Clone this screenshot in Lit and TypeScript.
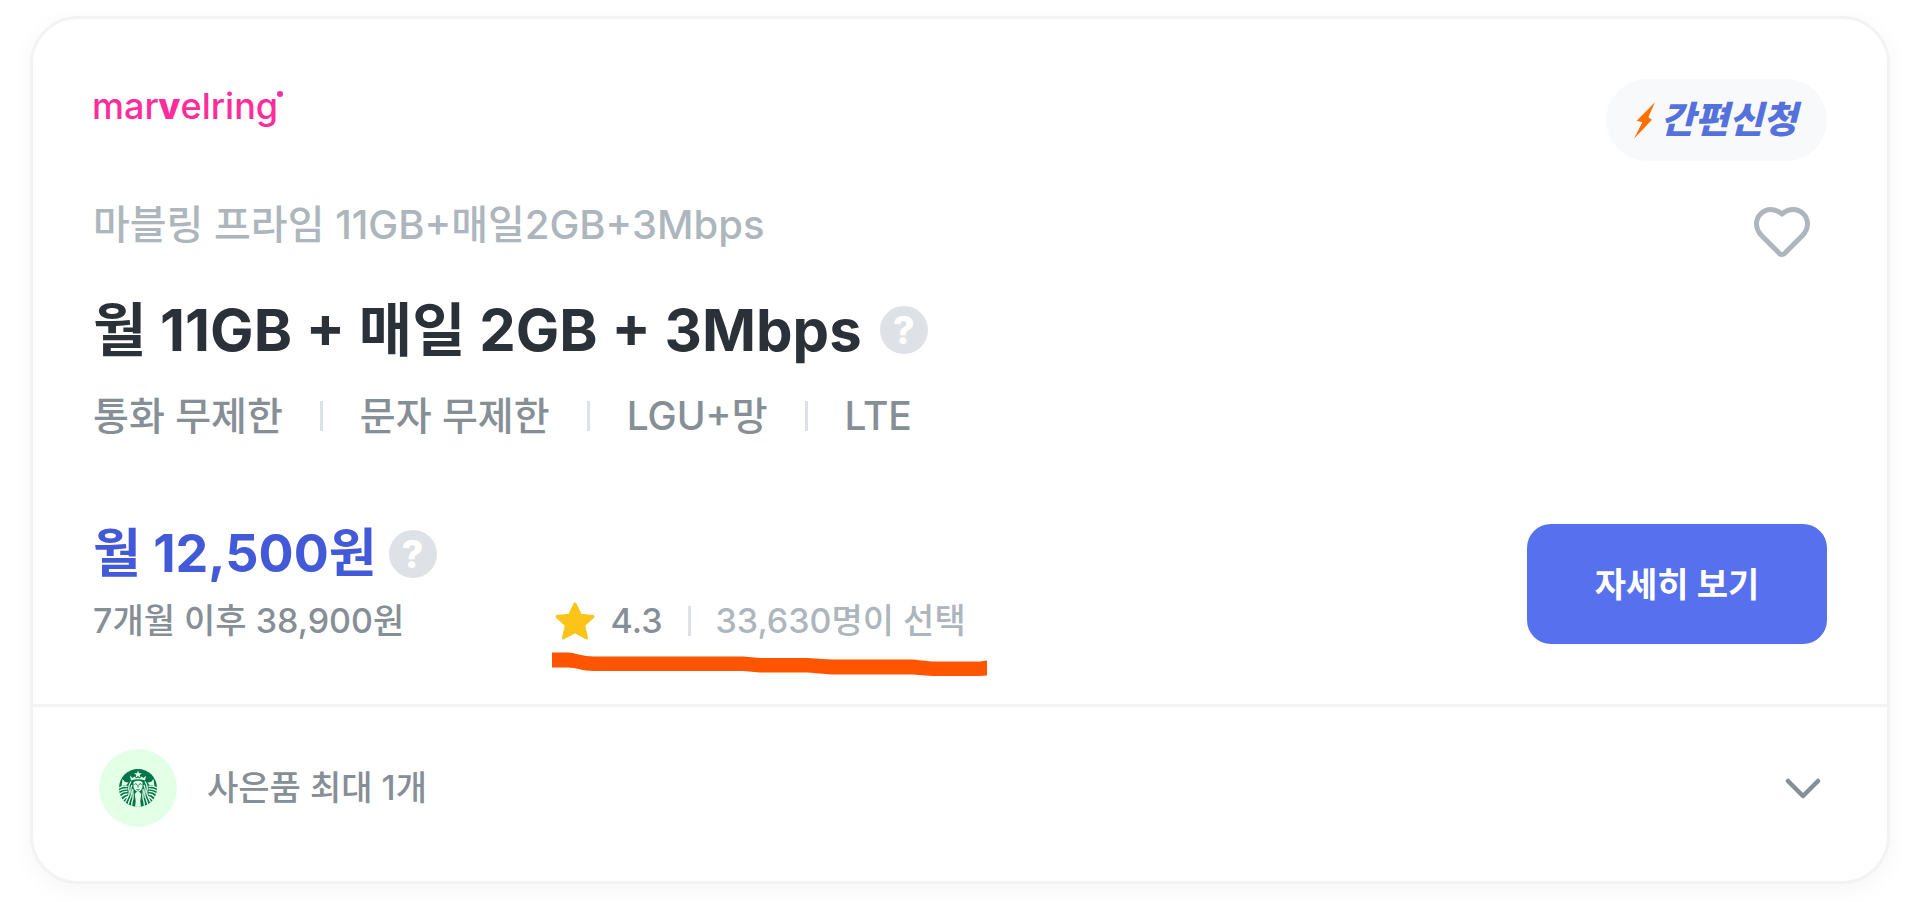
import { LitElement, html, css, svg } from "lit";
import { customElement, property, state } from "lit/decorators.js";

const logo = svg`
  <svg class="logo" viewBox="0 0 192 42" width="192" height="42" role="img" aria-label="marvelring">
    <text x="-1" y="31" fill="#ff2d9b" font-family="Inter, sans-serif" font-size="36" font-weight="500">mar<tspan font-weight="800">v</tspan>elring</text>
    <circle cx="187" cy="6" r="3" fill="#ff2d9b" />
  </svg>`;

const bolt = svg`
  <svg class="bolt" viewBox="218 305 63 110" width="21" height="37" aria-hidden="true">
    <path d="M281 305 L261 350 L272 358 L218 415 L243 365 L226 361 Z" fill="#ff7000" />
  </svg>`;

const heart = svg`
  <svg viewBox="0 0 56 51" width="56" height="51" aria-hidden="true">
    <path class="heart-line" d="M28 7 C24.5 4 21 2.5 17 2.5 C9 2.5 2.5 9 2.5 17 C2.5 21.5 4 24.5 7 28 L25.5 46.5 A3.5 3.5 0 0 0 30.5 46.5 L49 28 C52 24.5 53.5 21.5 53.5 17 C53.5 9 47 2.5 39 2.5 C35 2.5 31.5 4 28 7 Z"
      stroke="#adb5bd" stroke-width="5" stroke-linejoin="round" />
  </svg>`;

const star = svg`
  <svg viewBox="0 0 40 38" width="40" height="38" aria-hidden="true">
    <path d="M20 2 L25.4 13.2 L38 14.6 L28.6 23.2 L31.6 36 L20 29.6 L8.4 36 L11.4 23.2 L2 14.6 L14.6 13.2 Z"
      fill="#fcc419" stroke="#fcc419" stroke-width="3" stroke-linejoin="round" />
  </svg>`;

const marker = svg`
  <svg class="marker" viewBox="0 0 435 25" width="435" height="25" aria-hidden="true">
    <path d="M0 0.5 H16 C24 1 30 4.5 42 4.5 H188 C198 4.5 202 6 214 6 H250 C264 6 270 7.500 286 7.500 H356 C368 7.500 372 9.500 386 9.500 H428 L435 8.500 V23.500 L428 24 H386 C372 24 368 22.500 356 22.500 H286 C270 22.500 264 20.500 250 20.500 H214 C202 20.500 198 19 188 19 H42 C30 19 24 15.500 16 15.500 H0 Z" fill="#ff5500" />
  </svg>`;

const chevron = svg`
  <svg class="chevron" viewBox="0 0 36 22" width="36" height="22" aria-hidden="true">
    <path d="M3 4 L18 19 L33 4" fill="none" stroke="#868e96" stroke-width="4.500" stroke-linecap="round" stroke-linejoin="round" />
  </svg>`;

const siren = svg`
  <svg viewBox="0 0 76 76" width="38" height="38" role="img" aria-label="스타벅스">
    <defs><clipPath id="disc"><circle cx="38" cy="38" r="38" /></clipPath></defs>
    <g clip-path="url(#disc)">
      <rect width="76" height="76" fill="#00754a" />
      <g fill="#e3ffe6">
        <path d="M38 3 L40 8.500 L46 8.500 L41.500 12 L43 17.500 L38 14.200 L33 17.500 L34.500 12 L30 8.500 L36 8.500 Z" />
        <path d="M22 13 L27 18 L31 15 L34 19 L38 17 L42 19 L45 15 L49 18 L54 13 L52 23 Q38 18 24 23 Z" />
        <path d="M29 26 Q38 21 47 26 L47 36 Q45 44 38 46 Q31 44 29 36 Z" />
        <path d="M7 20 L12 26 L19 27 L14 33 Q8 31 5 36 Z" />
        <path d="M69 20 L64 26 L57 27 L62 33 Q68 31 71 36 Z" />
        <path d="M38 45 Q30 47 32 54 Q35 64 32 76 H44 Q41 64 44 54 Q46 47 38 45 Z" />
      </g>
      <g fill="none" stroke="#e3ffe6" stroke-width="2.600">
        <path d="M0 38 Q8 33 17 35 M0 44 Q8 39 17 40 M1 50 Q9 44 17 45 M4 56 Q10 50 17 50 M8 62 Q13 56 18 55" />
        <path d="M76 38 Q68 33 59 35 M76 44 Q68 39 59 40 M75 50 Q67 44 59 45 M72 56 Q66 50 59 50 M68 62 Q63 56 58 55" />
        <path d="M24 25 Q18 34 20 42 Q22 50 17 58 L13 66 M26 32 Q23 38 24 46 Q26 54 21 62 L18 72 M28 40 Q27 44 28 50 Q29 58 26 66 L25 76" />
        <path d="M52 25 Q58 34 56 42 Q54 50 59 58 L63 66 M50 32 Q53 38 52 46 Q50 54 55 62 L58 72 M48 40 Q49 44 48 50 Q47 58 50 66 L51 76" />
      </g>
      <path d="M31 31 Q33 28 36 31 M40 31 Q43 28 45 31 M38 31 V37 M35 41 Q38 43 41 41" fill="none" stroke="#00754a" stroke-width="2" />
    </g>
  </svg>`;

@customElement("help-button")
class HelpButton extends LitElement {
  @property() label = "";

  static styles = css`
    :host { display: flex; flex: none; }
    .help {
      width: 48px;
      height: 48px;
      padding: 0;
      border: 0;
      border-radius: 50%;
      background: #dee2e6;
      color: #fff;
      font: 800 38px/48px Inter, sans-serif;
      text-align: center;
      cursor: pointer;
    }
  `;

  render() {
    return html`<button class="help" type="button" aria-label=${this.label}>?</button>`;
  }
}

@customElement("app-root")
class AppRoot extends LitElement {
  @state() private liked = false;
  @state() private open = false;

  private specs = ["통화 무제한", "문자 무제한", "LGU+망", "LTE"];

  static styles = css`
    :host {
      display: block;
      box-sizing: border-box;
      padding: 16px 21px 18px 30px;
      background: #fff;
      font-family: Inter, "Noto Sans CJK KR", sans-serif;
      font-weight: 500;
      color: #868e96;
    }
    h2, p, ul { margin: 0; padding: 0; }
    svg { display: block; flex: none; }
    button { font-family: inherit; font-weight: inherit; cursor: pointer; }
    .card {
      border: 3px solid #f1f3f5;
      border-radius: 48px;
      background: #fff;
      box-shadow: 0 6px 24px rgba(0, 0, 0, 0.04);
    }
    .body { padding: 60px; }
    .row { display: flex; justify-content: space-between; }
    .head { align-items: flex-start; }
    .logo { margin-top: 9px; overflow: visible; }
    .badge {
      display: flex;
      align-items: center;
      gap: 6px;
      height: 82px;
      padding: 0 30px 0 28px;
      border-radius: 41px;
      background: #f8f9fb;
      color: #5571dc;
      font-size: 37px;
      font-weight: 900;
      font-style: italic;
    }
    .badge-text { padding-bottom: 6px; }
    .info { margin-top: 24px; align-items: flex-start; }
    .name { font-size: 40px; line-height: 80px; color: #adb5bd; }
    .title-line { display: flex; align-items: center; gap: 18px; margin-top: 22px; }
    .title { font-size: 58px; line-height: 86px; font-weight: 700; color: #2b3138; }
    .specs {
      display: flex;
      align-items: center;
      margin-top: 13px;
      list-style: none;
      font-size: 39px;
      line-height: 60px;
    }
    .specs li { display: flex; align-items: center; }
    .specs li + li::before {
      content: "";
      width: 3px;
      height: 30px;
      margin: 0 37px;
      background: #dee2e6;
    }
    .like {
      display: flex;
      align-items: center;
      justify-content: center;
      width: 90px;
      height: 94px;
      padding: 0;
      border: 0;
      background: none;
    }
    .heart-line { fill: none; }
    .liked .heart-line { fill: #adb5bd; }
    .deal { margin-top: 72px; align-items: flex-end; }
    .offer { display: flex; align-items: flex-end; gap: 115px; }
    .price-line { display: flex; align-items: center; gap: 12px; }
    .price { font-size: 52px; line-height: 72px; font-weight: 700; color: #4259d8; }
    .small { font-size: 34px; line-height: 46px; }
    .after { margin-top: 8px; }
    .rating { position: relative; display: flex; align-items: center; padding-left: 3px; }
    .score { margin-left: 16px; }
    .bar { width: 3px; height: 30px; margin: 0 25px; background: #dee2e6; }
    .picked { color: #adb5bd; }
    .marker { position: absolute; left: 0; top: 54px; }
    .detail {
      display: flex;
      align-items: center;
      justify-content: center;
      box-sizing: border-box;
      width: 300px;
      height: 120px;
      padding-bottom: 4px;
      border-radius: 24px;
      background: #5670ee;
      color: #fff;
      font-size: 34px;
      font-weight: 700;
      text-decoration: none;
    }
    .gift {
      display: flex;
      align-items: center;
      width: 100%;
      padding: 42px 66px 54px;
      border: 0;
      border-top: 3px solid #f1f3f5;
      background: none;
      color: inherit;
      text-align: left;
    }
    .coffee {
      display: flex;
      align-items: center;
      justify-content: center;
      width: 78px;
      height: 78px;
      border-radius: 50%;
      background: #e3ffe6;
    }
    .gift-text { flex: 1; margin-left: 30px; }
    .open .chevron { transform: rotate(180deg); }
  `;

  render() {
    return html`
      <article class="card">
        <div class="body">
          <div class="row head">
            ${logo}
            <span class="badge">${bolt}<span class="badge-text">간편신청</span></span>
          </div>
          <div class="row info">
            <div>
              <p class="name">마블링 프라임 11GB+매일2GB+3Mbps</p>
              <div class="title-line">
                <h2 class="title">월 11GB + 매일 2GB + 3Mbps</h2>
                <help-button label="데이터 안내"></help-button>
              </div>
              <ul class="specs">${this.specs.map((s) => html`<li>${s}</li>`)}</ul>
            </div>
            <button class="like ${this.liked ? "liked" : ""}" type="button" aria-label="찜하기"
              aria-pressed=${this.liked} @click=${() => (this.liked = !this.liked)}>${heart}</button>
          </div>
          <div class="row deal">
            <div class="offer">
              <div>
                <div class="price-line">
                  <p class="price">월 12,500원</p>
                  <help-button label="요금 안내"></help-button>
                </div>
                <p class="small after">7개월 이후 38,900원</p>
              </div>
              <div class="rating small">
                ${star}
                <span class="score">4.3</span>
                <span class="bar"></span>
                <span class="picked">33,630명이 선택</span>
                ${marker}
              </div>
            </div>
            <a class="detail" href="#detail">자세히 보기</a>
          </div>
        </div>
        <button class="gift small ${this.open ? "open" : ""}" type="button"
          aria-expanded=${this.open} @click=${() => (this.open = !this.open)}>
          <span class="coffee">${siren}</span>
          <span class="gift-text">사은품 최대 1개</span>
          ${chevron}
        </button>
      </article>
    `;
  }
}
